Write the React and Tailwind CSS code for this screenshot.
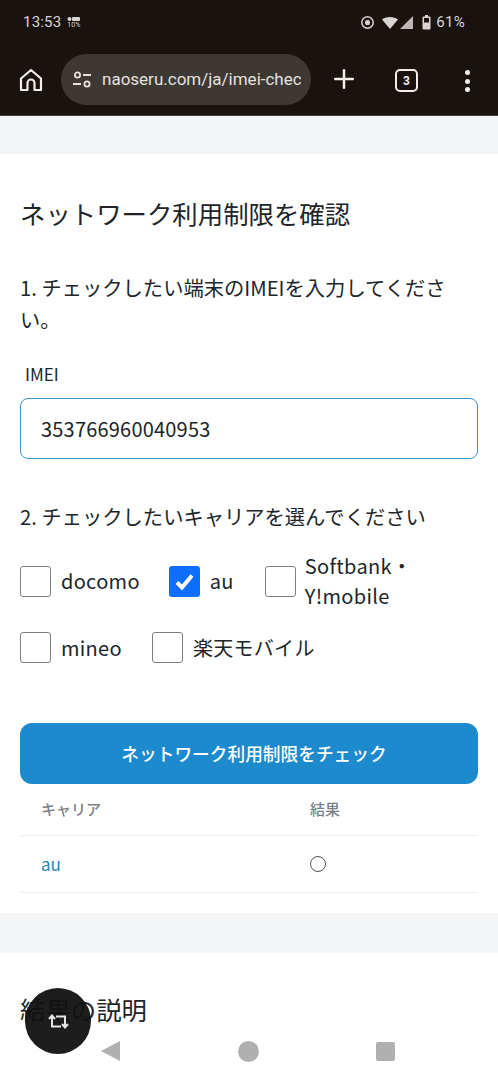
import { Plus } from "lucide-react";

const jp = "font-['Noto_Sans_CJK_JP','Noto_Sans',sans-serif]";

function Check({ label, checked, className = "", gap = "gap-[10px]" }) {
  return (
    <label className={`flex items-center ${gap} ${className}`}>
      <span
        className={`flex h-[31px] w-[31px] shrink-0 items-center justify-center rounded-[3px] ${
          checked ? "bg-[#0d6efd]" : "border border-[#7f7f7f] bg-white"
        }`}
      >
        {checked && (
          <svg width="23" height="23" viewBox="0 0 23 23" fill="none">
            <path d="M4 12.5l5 5L19 5.5" stroke="#fff" strokeWidth="4" />
          </svg>
        )}
      </span>
      <span className="text-[20px] leading-[30px] tracking-[0.3px] text-[#212529]">{label}</span>
    </label>
  );
}

function StatusBar() {
  return (
    <div className="flex h-[44px] items-center justify-between pl-[23px] pr-[33px] pt-[1px] font-['Roboto',sans-serif] text-[15px] text-[#d8d5d2]">
      <div className="flex items-center gap-[6px]">
        <span className="tracking-[0.2px]">13:53</span>
        <div className="flex flex-col items-center leading-none">
          <svg width="13" height="6" viewBox="0 0 13 6" fill="#d8d5d2">
            <circle cx="2.5" cy="3" r="2" />
            <rect x="5" y="1" width="8" height="4" rx="1" />
          </svg>
          <span className="text-[7px]">10%</span>
        </div>
      </div>
      <div className="flex items-center">
        <svg width="15" height="15" viewBox="0 0 15 15" fill="none" stroke="#d8d5d2" strokeWidth="1.5">
          <circle cx="7.5" cy="7.5" r="5.7" />
          <circle cx="7.5" cy="7.5" r="1.8" fill="#d8d5d2" />
        </svg>
        <svg className="ml-[7px]" width="32" height="15" viewBox="0 0 32 15" fill="#d8d5d2">
          <path d="M0 4.5C3 1 13 1 16 4.5L8 14z" />
          <path d="M31 1v13H18z" opacity="0.85" />
        </svg>
        <svg className="ml-[8px]" width="9" height="15" viewBox="0 0 9 15">
          <rect x="0.5" y="1.5" width="8" height="13" rx="1" fill="#d8d5d2" />
          <rect x="3" y="0" width="3" height="2" fill="#d8d5d2" />
          <rect x="2" y="3" width="5" height="4.5" fill="#1a120e" />
        </svg>
        <span className="ml-[5px] tracking-[0.3px]">61%</span>
      </div>
    </div>
  );
}

function Toolbar() {
  return (
    <div className="flex h-[72px] items-start border-b border-[#4a3f38] pt-[10px]">
      <svg className="ml-[19px] mt-[14px]" width="24" height="24" viewBox="0 0 24 24" fill="none" stroke="#f3eeea" strokeWidth="2.2" strokeLinejoin="round">
        <path d="M2 10.5L12 2l10 8.5V22h-6.5v-7a3.5 3.5 0 0 0-7 0v7H2z" />
      </svg>
      <div className="ml-[18px] flex h-[51px] w-[250px] items-center rounded-full bg-[#3e3834] pl-[11px] text-[#e6e1dc]">
        <svg width="20" height="20" viewBox="0 0 20 20" fill="none" stroke="#e6e1dc" strokeWidth="1.8">
          <circle cx="5.5" cy="5" r="2.6" />
          <path d="M11 5h8M1 14h8" />
          <circle cx="15" cy="14" r="2.6" />
        </svg>
        <span className="ml-[10px] w-[199px] overflow-hidden whitespace-nowrap font-['Roboto',sans-serif] text-[17px]">
          naoseru.com/ja/imei-chec
        </span>
      </div>
      <Plus className="ml-[18px] mt-[10px]" size={30} color="#f3eeea" strokeWidth={2} />
      <div className="ml-[36px] mt-[15px] flex h-[23px] w-[23px] items-center justify-center rounded-[5px] border-2 border-[#f3eeea] font-['Roboto',sans-serif] text-[12px] font-bold text-[#f3eeea]">
        3
      </div>
      <div className="ml-[47px] mt-[16px] flex flex-col gap-[3.5px]">
        <span className="h-[5px] w-[5px] rounded-full bg-[#f3eeea]" />
        <span className="h-[5px] w-[5px] rounded-full bg-[#f3eeea]" />
        <span className="h-[5px] w-[5px] rounded-full bg-[#f3eeea]" />
      </div>
    </div>
  );
}

export default function App() {
  return (
    <div className={`relative h-[1080px] w-[498px] overflow-hidden bg-[#f3f5f7] ${jp}`}>
      <div className="bg-[#1a120e]">
        <StatusBar />
        <Toolbar />
      </div>

      <div className="mt-[38px] h-[759px] bg-white px-[20px] pt-[39px] text-[#212529]">
        <h2 className="text-[25.4px] leading-[40px]">ネットワーク利用制限を確認</h2>
        <p className="mt-[38px] w-[440px] text-[20.3px] leading-[32px]">1. チェックしたい端末のIMEIを入力してください。</p>
        <div className="ml-[5px] mt-[25px] text-[17px] leading-[28px]">IMEI</div>
        <div className="mt-[10px] flex h-[61px] w-[458px] items-center rounded-[8px] border border-[#3e93c6] pl-[20px] text-[20px] tracking-[0.2px]">
          353766960040953
        </div>
        <p className="mt-[41px] text-[20.3px] leading-[32px]">2. チェックしたいキャリアを選んでください</p>

        <div className="mt-[19px] flex items-center">
          <Check label="docomo" />
          <Check label="au" checked className="ml-[29px]" />
          <Check label={<>Softbank・<br />Y!mobile</>} gap="gap-[9px]" className="ml-[31px]" />
        </div>
        <div className="mt-[21px] flex items-center">
          <Check label="mineo" />
          <Check label="楽天モバイル" className="ml-[30px]" />
        </div>

        <button className="mt-[60px] flex h-[61px] w-[458px] items-center justify-center rounded-[12px] bg-[#1c8acd] pl-[10px] text-[17.7px] font-medium text-white">
          ネットワーク利用制限をチェック
        </button>

        <div className="flex h-[52px] items-center border-b border-[#eef0f2] pl-[21px] text-[15px] font-medium text-[#7b8187]">
          <span className="w-[269px]">キャリア</span>
          <span>結果</span>
        </div>
        <div className="flex h-[57px] items-center border-b border-[#eef0f2] pl-[21px] text-[#2b88b5]">
          <span className="w-[269px] text-[17px]">au</span>
          <span className="h-[16px] w-[16px] rounded-full border border-[#555]" />
        </div>
      </div>

      <div className="mt-[40px] h-[200px] bg-white px-[20px] pt-[38px] text-[#212529]">
        <h2 className="text-[25.4px] leading-[36px]">結果の説明</h2>
      </div>

      <div className="absolute left-[25px] top-[988px] flex h-[66px] w-[66px] items-center justify-center rounded-full bg-[#111]/95">
        <svg width="21" height="15" viewBox="0 0 21 15" fill="none" stroke="#e5e5e5" strokeWidth="2">
          <path d="M1 5l3-3.5L7 5M4 2v10.5h9" />
          <path d="M20 10l-3 3.5L14 10M17 13V2.5H8" />
        </svg>
      </div>
      <div className="absolute left-[101px] top-[1041px] h-0 w-0 border-y-[10px] border-r-[19px] border-y-transparent border-r-[#b0b0b0]" />
      <div className="absolute left-[238px] top-[1041px] h-[21px] w-[21px] rounded-full bg-[#b0b0b0]" />
      <div className="absolute left-[376px] top-[1042px] h-[19px] w-[19px] rounded-[2px] bg-[#b0b0b0]" />
    </div>
  );
}
